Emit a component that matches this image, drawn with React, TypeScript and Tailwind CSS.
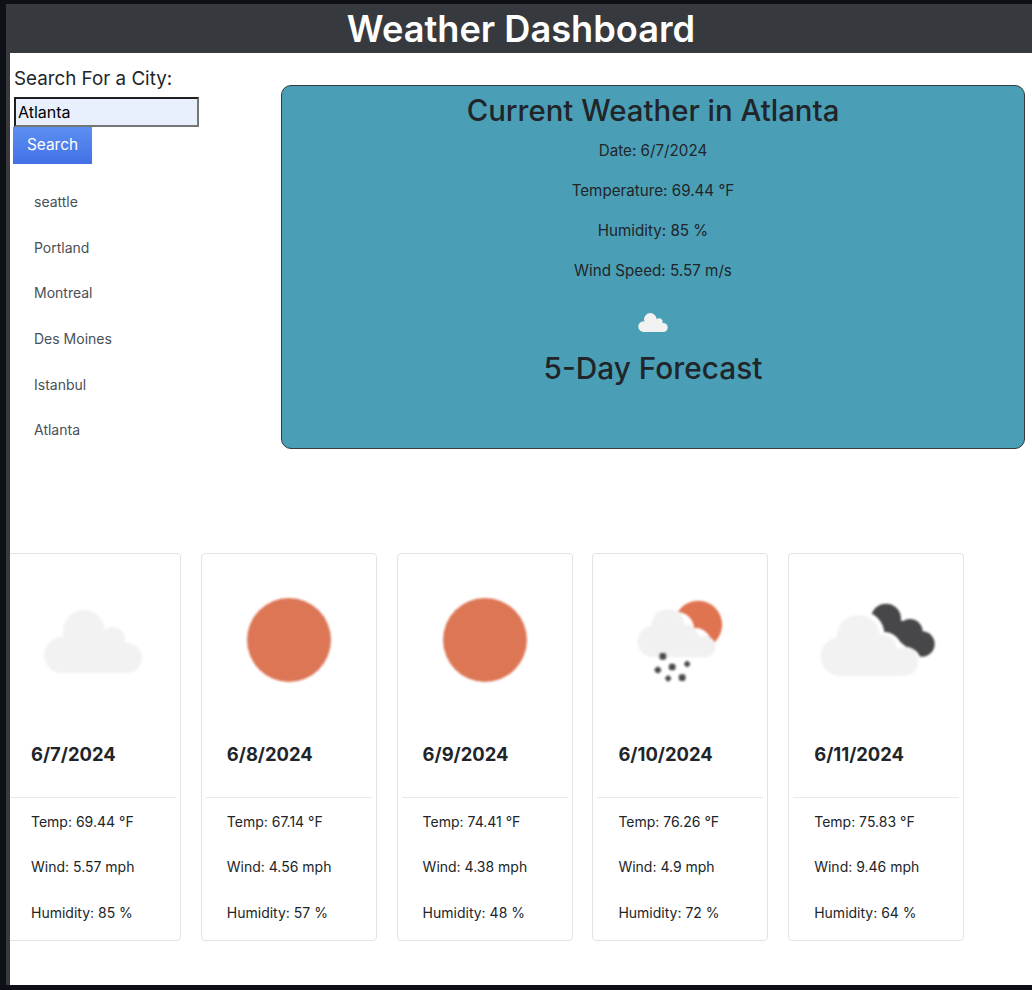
import React from 'react';

const cities = ['seattle', 'Portland', 'Montreal', 'Des Moines', 'Istanbul', 'Atlanta'];

const forecast = [
  { date: '6/7/2024', temp: '69.44', wind: '5.57', humidity: '85', icon: 'cloud' },
  { date: '6/8/2024', temp: '67.14', wind: '4.56', humidity: '57', icon: 'sun' },
  { date: '6/9/2024', temp: '74.41', wind: '4.38', humidity: '48', icon: 'sun' },
  { date: '6/10/2024', temp: '76.26', wind: '4.9', humidity: '72', icon: 'snow' },
  { date: '6/11/2024', temp: '75.83', wind: '9.46', humidity: '64', icon: 'dark' },
];

function CloudShape() {
  return (
    <g fill="#f2f2f2">
      <circle cx="56" cy="56" r="21" />
      <circle cx="85" cy="64" r="12" />
      <circle cx="34" cy="80" r="18" />
      <circle cx="99" cy="83" r="15" />
      <rect x="34" y="68" width="65" height="30" />
      <rect x="44" y="62" width="50" height="10" />
    </g>
  );
}

function WeatherIcon({ type }: { type: string }) {
  if (type === 'sun') {
    return (
      <svg viewBox="0 0 130 130" className="w-[130px] h-[130px] blur-[0.8px]">
        <circle cx="65" cy="65" r="42" fill="#dc7655" />
      </svg>
    );
  }
  if (type === 'snow') {
    return (
      <svg viewBox="76.5 105 390 390" className="w-[130px] h-[130px] blur-[0.8px]">
        <circle cx="326" cy="254" r="72" fill="#e07350" />
        <g fill="#ffffff">
          <circle cx="262" cy="268" r="52" />
          <circle cx="318" cy="312" r="48" />
          <circle cx="352" cy="350" r="48" />
        </g>
        <g fill="#f1f1f1">
          <circle cx="235" cy="258" r="50" />
          <circle cx="285" cy="295" r="42" />
          <circle cx="190" cy="305" r="46" />
          <circle cx="346" cy="320" r="32" />
          <rect x="190" y="290" width="156" height="62" />
        </g>
        <g fill="#4a4a4c">
          <rect x="210" y="339" width="20" height="20" rx="6" />
          <rect x="196" y="381" width="18" height="18" rx="6" transform="rotate(45 205 390)" />
          <rect x="238" y="371" width="20" height="20" rx="6" />
          <rect x="285" y="364" width="16" height="16" rx="5" transform="rotate(45 293 372)" />
          <rect x="228" y="407" width="16" height="16" rx="5" transform="rotate(45 236 415)" />
          <rect x="268" y="403" width="20" height="20" rx="6" />
        </g>
      </svg>
    );
  }
  if (type === 'dark') {
    return (
      <svg viewBox="663 105 390 390" className="w-[130px] h-[130px] blur-[0.8px]">
        <g fill="#47474a">
          <circle cx="888" cy="236" r="45" />
          <circle cx="960" cy="275" r="38" />
          <circle cx="996" cy="312" r="38" />
          <polygon points="860,200 1020,290 985,350 850,240" />
        </g>
        <g fill="#ffffff">
          <circle cx="815" cy="282" r="68" />
          <circle cx="882" cy="330" r="54" />
          <circle cx="945" cy="368" r="48" />
        </g>
        <g fill="#f2f2f2">
          <circle cx="805" cy="290" r="65" />
          <circle cx="875" cy="330" r="46" />
          <circle cx="750" cy="350" r="58" />
          <circle cx="942" cy="365" r="43" />
          <rect x="750" y="340" width="192" height="68" />
        </g>
      </svg>
    );
  }
  return (
    <svg viewBox="0 0 130 130" className="w-[130px] h-[130px] blur-[0.8px]">
      <CloudShape />
    </svg>
  );
}

export default function App() {
  return (
    <div className="h-[990px] bg-[#0d1117] pt-[4px] pb-[5px] pl-[6px] overflow-hidden font-['Inter',sans-serif] text-[#212529]">
      <div className="h-full border-l-[4px] border-t border-[#3a3a3c] bg-white overflow-hidden">
        <header className="h-[48px] bg-[#363a3e] flex items-center justify-center">
          <h1 className="text-[36.2px] leading-[48px] font-semibold text-white">Weather Dashboard</h1>
        </header>

        <div className="flex">
          <aside className="w-[271px] pt-[12px] shrink-0">
            <label className="block pl-[4px] text-[18.8px] leading-[27px] mb-[5px]">Search For a City:</label>
            <input
              readOnly
              value="Atlanta"
              className="block ml-[4px] w-[185px] h-[30px] bg-[#e8f0fe] border-2 border-t-[#1f1f1f] border-l-[#1f1f1f] border-r-[#767676] border-b-[#767676] px-[2px] text-[16px] text-black"
            />
            <button className="block ml-[3px] w-[79px] h-[37px] pb-[1px] bg-gradient-to-b from-[#5b8ff0] to-[#4470e8] text-white text-[15.4px]">
              Search
            </button>
            <ul className="mt-[15px]">
              {cities.map((city) => (
                <li key={city} className="h-[45.6px] pl-[24px] flex items-center text-[14px] text-[#495057]">
                  {city}
                </li>
              ))}
            </ul>
          </aside>

          <section className="mt-[32px] w-[744px] h-[364px] bg-[#4a9fb6] border border-[#343a40] rounded-[10px] flex flex-col items-center">
            <h2 className="text-[29.4px] leading-[36px] mt-[7px] font-medium">Current Weather in Atlanta</h2>
            <p className="text-[15.2px] leading-[24px] mt-[10px]">Date: 6/7/2024</p>
            <p className="text-[15.2px] leading-[24px] mt-[16px]">Temperature: 69.44 °F</p>
            <p className="text-[15.2px] leading-[24px] mt-[16px]">Humidity: 85 %</p>
            <p className="text-[15.2px] leading-[24px] mt-[16px]">Wind Speed: 5.57 m/s</p>
            <svg viewBox="15 35 100 63" className="w-[30px] h-[21px] mt-[29px]">
              <CloudShape />
            </svg>
            <h2 className="text-[29.8px] leading-[34px] mt-[18px] font-medium">5-Day Forecast</h2>
          </section>
        </div>

        <div className="flex gap-[19.8px] mt-[100px] -ml-[5px]">
          {forecast.map((day) => (
            <article
              key={day.date}
              className="w-[176px] h-[388px] shrink-0 bg-white border border-[#e3e3e3] rounded-[4px] px-[4px] flex flex-col text-[14px]"
            >
              <div className="h-[130px] mt-[21px] flex justify-center">
                <WeatherIcon type={day.icon} />
              </div>
              <h3 className="pl-[21px] mt-[36px] text-[18.4px] leading-[27px] font-bold">{day.date}</h3>
              <hr className="mt-[29px] border-[#e9e9e9]" />
              <p className="pl-[21px] h-[45.5px] mt-[1px] flex items-center">Temp: {day.temp} °F</p>
              <p className="pl-[21px] h-[45.5px] flex items-center">Wind: {day.wind} mph</p>
              <p className="pl-[21px] h-[45.5px] flex items-center">Humidity: {day.humidity} %</p>
            </article>
          ))}
        </div>
      </div>
    </div>
  );
}
